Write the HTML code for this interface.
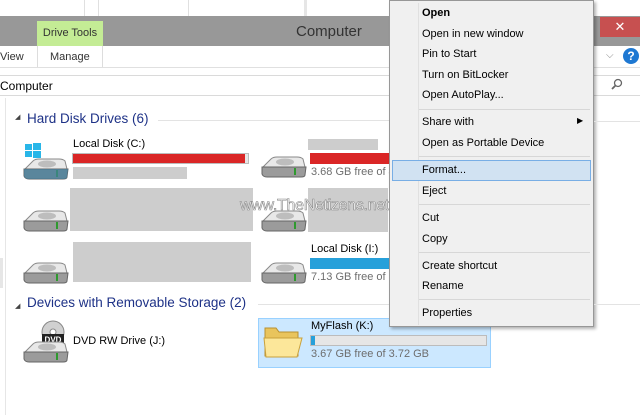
<!DOCTYPE html>
<html><head><meta charset="utf-8"><style>
*{margin:0;padding:0;box-sizing:border-box}
body{width:640px;height:415px;overflow:hidden;background:#fff;font-family:"Liberation Sans",sans-serif;font-size:11px;color:#000;position:relative}
.a{position:absolute}
.g{background:#cdcdcd}
.t{font-size:11px;color:#000;white-space:nowrap}
.s{font-size:11px;color:#6d6d6d;white-space:nowrap}
.h{color:#1e3287;font-size:13.5px;white-space:nowrap}
.menu{left:389px;top:0;width:205px;height:327px;background:#f0f0f0;border:1px solid #979797;box-shadow:2px 2px 3px rgba(0,0,0,.3)}
.mi{position:absolute;left:32px;font-size:11px;white-space:nowrap}
.sep{position:absolute;left:29px;right:3px;height:1px;background:#d7d7d7}
</style></head><body>
<div class="a" style="left:0;top:0;width:640px;height:17px;background:#fff"></div>
<div class="a" style="left:84px;top:0;width:1px;height:16px;background:#e0e0e0"></div>
<div class="a" style="left:98px;top:0;width:1px;height:16px;background:#e0e0e0"></div>
<div class="a" style="left:188px;top:0;width:1px;height:16px;background:#e0e0e0"></div>
<div class="a" style="left:304px;top:0;width:3px;height:16px;background:#e6e6e6"></div>
<div class="a" style="left:0;top:16px;width:640px;height:30px;background:#989898"></div>
<div class="a" style="left:37px;top:21px;width:66px;height:25px;background:#c4ec95;font-size:11px;color:#333;text-align:center;line-height:24px">Drive Tools</div>
<div class="a" style="left:296px;top:23px;font-size:15px;color:#333">Computer</div>
<div class="a" style="left:600px;top:17px;width:40px;height:20px;background:#c75050;color:#fff;text-align:center;font-size:13px;line-height:19px">✕</div>
<div class="a" style="left:37px;top:46px;width:66px;height:22px;border-left:1px solid #ddd;border-right:1px solid #ddd"></div>
<div class="a" style="left:0;top:51px;font-size:11px;color:#333">View</div>
<div class="a" style="left:50px;top:51px;font-size:11px;color:#333">Manage</div>
<div class="a" style="left:0;top:67px;width:640px;height:1px;background:#e0e0e0"></div>
<div class="a" style="left:606px;top:50px;color:#888;font-size:10px">⌵</div>
<div class="a" style="left:623px;top:48px;width:16px;height:16px;border-radius:50%;background:#1e78d2;color:#fff;font-weight:bold;font-size:12px;text-align:center;line-height:16px">?</div>
<div class="a" style="left:0;top:75px;width:640px;height:21px;border-top:1px solid #dadada;border-bottom:1px solid #dadada"></div>
<div class="a" style="left:0;top:79px;font-size:12px">Computer</div>
<svg class="a" style="left:610px;top:78px" width="14" height="14"><circle cx="8" cy="5" r="3.5" fill="none" stroke="#666" stroke-width="1.3"/><line x1="5.5" y1="7.5" x2="2" y2="11" stroke="#666" stroke-width="1.8"/></svg>
<div class="a" style="left:5px;top:98px;width:1px;height:317px;background:#e6e6e6"></div>
<div class="a" style="left:0;top:258px;width:3px;height:30px;background:#e6e6e6"></div>

<svg width="0" height="0" style="position:absolute"><defs>
<g id="drv"><path d="M2 14 L10 6 Q12 4 16 4 L36 4 Q40 4 42 6 L44 14 Z" fill="#e8e8e8" stroke="#8a8a8a"/><ellipse cx="24" cy="9" rx="9" ry="3.5" fill="#bdbdbd"/><path d="M1 14 L45 14 L44 22 Q44 24 40 24 L6 24 Q2 24 1 21 Z" fill="#9b9b9b" stroke="#666"/><rect x="33" y="15" width="2" height="7" fill="#2f9a2f"/></g>
</defs></svg>

<div class="a" style="left:15px;top:113px;font-size:7px;color:#444">◢</div>
<div class="a h" style="left:27px;top:111px">Hard Disk Drives (6)</div>
<div class="a" style="left:158px;top:120px;width:232px;height:1px;background:#e3e3e3"></div>

<svg class="a" style="left:24px;top:142px" width="20" height="18"><rect x="1" y="2" width="7" height="6" fill="#29b6e8"/><rect x="9" y="1" width="8" height="7" fill="#29b6e8"/><rect x="1" y="9" width="7" height="6" fill="#29b6e8"/><rect x="9" y="9" width="8" height="7" fill="#29b6e8"/></svg>
<svg class="a" style="left:23px;top:155px" width="46" height="26"><use href="#drv"/><path d="M1 14 L45 14 L44 22 Q44 24 40 24 L6 24 Q2 24 1 21 Z" fill="#3f7e9c" opacity=".7"/></svg>
<div class="a t" style="left:73px;top:138px">Local Disk (C:)</div>
<div class="a" style="left:72px;top:153px;width:177px;height:11px;background:#e6e6e6;border:1px solid #bcbcbc"></div>
<div class="a" style="left:73px;top:154px;width:172px;height:9px;background:#da2626"></div>
<div class="a g" style="left:73px;top:167px;width:114px;height:12px"></div>
<svg class="a" style="left:23px;top:207px" width="46" height="26"><use href="#drv"/></svg>
<div class="a g" style="left:70px;top:188px;width:183px;height:43px"></div>
<svg class="a" style="left:23px;top:259px" width="46" height="26"><use href="#drv"/></svg>
<div class="a g" style="left:73px;top:242px;width:178px;height:40px"></div>
<svg class="a" style="left:261px;top:153px" width="46" height="26"><use href="#drv"/></svg>
<div class="a g" style="left:308px;top:139px;width:70px;height:11px"></div>
<div class="a" style="left:310px;top:153px;width:80px;height:11px;background:#da2626"></div>
<div class="a s" style="left:311px;top:166px">3.68 GB free of 4</div>
<svg class="a" style="left:261px;top:207px" width="46" height="26"><use href="#drv"/></svg>
<div class="a g" style="left:308px;top:188px;width:80px;height:44px"></div>
<svg class="a" style="left:261px;top:259px" width="46" height="26"><use href="#drv"/></svg>
<div class="a t" style="left:311px;top:243px">Local Disk (I:)</div>
<div class="a" style="left:310px;top:258px;width:80px;height:11px;background:#26a0da"></div>
<div class="a s" style="left:311px;top:271px">7.13 GB free of 3</div>
<div class="a" style="left:240px;top:197px;font-size:16px;color:#fff;-webkit-text-stroke:0.6px #888;white-space:nowrap;letter-spacing:-0.3px">www.TheNetizens.net</div>

<div class="a" style="left:15px;top:302px;font-size:7px;color:#444">◢</div>
<div class="a h" style="left:27px;top:295px">Devices with Removable Storage (2)</div>
<div class="a" style="left:258px;top:304px;width:132px;height:1px;background:#e3e3e3"></div>
<svg class="a" style="left:23px;top:320px" width="46" height="44"><circle cx="30" cy="12" r="11" fill="#d0d0d0" stroke="#888"/><circle cx="30" cy="12" r="3" fill="#fff" stroke="#888"/><rect x="19" y="14" width="22" height="10" fill="#222"/><text x="30" y="22.5" font-size="8" fill="#fff" text-anchor="middle" font-family="Liberation Sans" font-weight="bold">DVD</text><g transform="translate(0,18)"><use href="#drv"/></g></svg>
<div class="a t" style="left:73px;top:335px">DVD RW Drive (J:)</div>
<div class="a" style="left:258px;top:318px;width:233px;height:50px;background:#cce8ff;border:1px solid #99d1ff"></div>
<svg class="a" style="left:262px;top:324px" width="42" height="36"><path d="M3 4 L14 4 L17 8 L36 8 L36 32 L3 32 Z" fill="#e9c45c" stroke="#b89030"/><path d="M2 14 L40 14 L35 33 L4 33 Z" fill="#fce79a" stroke="#c9a13c"/></svg>
<div class="a t" style="left:311px;top:320px">MyFlash (K:)</div>
<div class="a" style="left:310px;top:335px;width:177px;height:11px;background:#e6e6e6;border:1px solid #bcbcbc"></div>
<div class="a" style="left:311px;top:336px;width:4px;height:9px;background:#26a0da"></div>
<div class="a s" style="left:311px;top:348px">3.67 GB free of 3.72 GB</div>

<div class="a menu">
<div class="a" style="left:28px;top:2px;width:1px;height:322px;background:#e0e0e0"></div>
<div class="mi" style="top:6px;font-weight:bold">Open</div>
<div class="mi" style="top:27px">Open in new window</div>
<div class="mi" style="top:47px">Pin to Start</div>
<div class="mi" style="top:68px">Turn on BitLocker</div>
<div class="mi" style="top:88px">Open AutoPlay...</div>
<div class="sep" style="top:108px"></div>
<div class="mi" style="top:115px">Share with</div>
<div class="a" style="left:187px;top:115px;font-size:8px">▶</div>
<div class="mi" style="top:136px">Open as Portable Device</div>
<div class="sep" style="top:155px"></div>
<div class="a" style="left:2px;top:159px;width:199px;height:21px;background:#d1e2f2;border:1px solid #78aee5"></div>
<div class="mi" style="top:163px">Format...</div>
<div class="mi" style="top:184px">Eject</div>
<div class="sep" style="top:203px"></div>
<div class="mi" style="top:211px">Cut</div>
<div class="mi" style="top:232px">Copy</div>
<div class="sep" style="top:251px"></div>
<div class="mi" style="top:259px">Create shortcut</div>
<div class="mi" style="top:279px">Rename</div>
<div class="sep" style="top:298px"></div>
<div class="mi" style="top:306px">Properties</div>
</div>
<div class="a" style="left:594px;top:121px;width:46px;height:1px;background:#e3e3e3"></div>
<div class="a" style="left:594px;top:304px;width:46px;height:1px;background:#e3e3e3"></div>
</body></html>
